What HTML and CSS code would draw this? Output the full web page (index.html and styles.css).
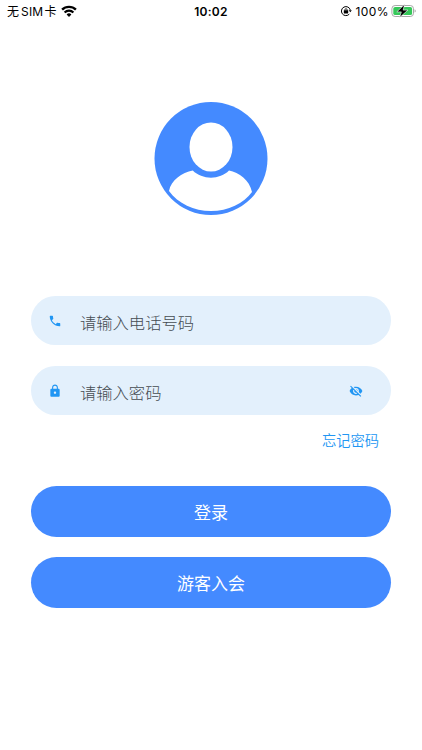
FILE: index.html
```html
<!DOCTYPE html>
<html lang="zh-CN">
<head>
	<meta charset="utf-8">
	<meta name="viewport" content="width=device-width, initial-scale=1">
	<title>登录</title>
	<link rel="stylesheet" href="styles.css">
</head>
<body>
	<div class="status">
		<div class="status-left">
			<span class="carrier">无<span class="sim">SIM</span>卡</span>
			<svg class="wifi" viewBox="0 0 16 12" width="16" height="12">
				<path d="M1.1 4.7a9.8 9.8 0 0 1 13.8 0" fill="none" stroke="#000" stroke-width="2.4"/>
				<path d="M3.6 7.4a6.2 6.2 0 0 1 8.8 0" fill="none" stroke="#000" stroke-width="2.2"/>
				<path d="M8 11.9L5.6 9.5a3.4 3.4 0 0 1 4.8 0z"/>
			</svg>
		</div>
		<div class="time">10:02</div>
		<div class="status-right">
			<svg class="rotate" viewBox="0 0 12 12" width="12" height="12">
				<path d="M9.3 9.1A4.5 4.5 0 1 1 10.3 5" fill="none" stroke="#000" stroke-width="1"/>
				<path d="M8.6 5.2h3.2l-1.5 2.1z"/>
				<rect x="3.8" y="5.3" width="4.4" height="3.2" rx=".4"/>
				<path d="M4.9 5.6v-.8a1.1 1.1 0 0 1 2.2 0v.8" fill="none" stroke="#000" stroke-width=".8"/>
			</svg>
			<span class="percent">100%</span>
			<svg class="battery" viewBox="0 0 26 14" width="26" height="14">
				<rect x=".9" y="1.5" width="21.6" height="11" rx="3.2" fill="#fff" stroke="#a8a8a8"/>
				<rect x="2.3" y="2.9" width="18.8" height="8.2" rx="1.9" fill="#35c759"/>
				<path d="M23.6 5.3v3.2q1.1-.5 1.1-1.6t-1.1-1.6z" fill="#a0a0a0"/>
				<path d="M13.6.3L5.8 7.9h4.5L8.6 13.600l8.300-7.500h-4.700z" stroke="#fff" stroke-width=".6"/>
			</svg>
		</div>
	</div>

	<div class="login">
		<svg class="avatar" viewBox="0 .5 114 114" width="114" height="114">
			<circle cx="57" cy="57" r="56.5" fill="#448aff"/>
			<ellipse cx="57" cy="45.500" rx="21.500" ry="24.500" fill="#fff"/>
			<path d="M38.800 69C28 71 17 78.500 15 89.500C24 102 40 109.500 57 109.500S90 102 98 90.500C95.500 78.500 85 71 75 69C66 78.500 48 78.500 38.800 69z" fill="#fff"/>
		</svg>

		<form class="form">
			<label class="field">
				<svg class="icon" viewBox="0 0 24 24" width="14" height="14"><path d="M6.62 10.79c1.44 2.83 3.76 5.14 6.59 6.59l2.2-2.2c.27-.27.67-.36 1.02-.24 1.12.37 2.33.57 3.57.57.55 0 1 .45 1 1V20c0 .55-.45 1-1 1-9.390 0-17-7.610-17-17 0-.55.45-1 1-1h3.500c.55 0 1 .45 1 1 0 1.250.2 2.450.57 3.570.11.35.03.74-.25 1.020l-2.200 2.200z"/></svg>
				<input type="tel" placeholder="请输入电话号码">
			</label>
			<label class="field">
				<svg class="icon" viewBox="0 0 24 24" width="14" height="14"><path d="M18 8h-1V6c0-2.760-2.240-5-5-5S7 3.240 7 6v2H6c-1.100 0-2 .9-2 2v10c0 1.100.9 2 2 2h12c1.100 0 2-.9 2-2V10c0-1.100-.9-2-2-2zm-6 9c-1.100 0-2-.9-2-2s.9-2 2-2 2 .9 2 2-.9 2-2 2zm3.100-9H8.900V6c0-1.710 1.390-3.100 3.100-3.100 1.710 0 3.100 1.390 3.100 3.100v2z"/></svg>
				<input type="password" placeholder="请输入密码">
				<svg class="icon" viewBox="0 0 24 24" width="14" height="14"><path d="M12 7c2.760 0 5 2.240 5 5 0 .65-.13 1.260-.36 1.830l2.920 2.920c1.510-1.260 2.700-2.890 3.430-4.750-1.730-4.390-6-7.500-11-7.500-1.400 0-2.740.25-3.980.7l2.160 2.160C10.740 7.130 11.350 7 12 7zM2 4.270l2.280 2.280.46.46C3.080 8.300 1.780 10.020 1 12c1.730 4.390 6 7.500 11 7.500 1.550 0 3.030-.3 4.380-.84l.42.42L19.730 22 21 20.730 3.270 3 2 4.270zM7.530 9.800l1.550 1.550c-.05.21-.08.43-.08.65 0 1.660 1.340 3 3 3 .22 0 .44-.03.65-.08l1.550 1.550c-.67.33-1.410.53-2.200.53-2.760 0-5-2.240-5-5 0-.79.2-1.530.53-2.200zm4.310-.78l3.150 3.150.02-.16c0-1.660-1.340-3-3-3l-.17.01z"/></svg>
			</label>
			<a class="forget">忘记密码</a>
			<button class="btn" type="button">登录</button>
			<button class="btn" type="button">游客入会</button>
		</form>
	</div>
</body>
</html>
```
FILE: styles.css
```css
* {
	box-sizing: border-box;
}
body {
	margin: 0;
	background: #fff;
	font-family: "Noto Sans CJK SC", sans-serif;
	font-weight: 300;
}
.status {
	display: grid;
	grid-template-columns: 1fr auto 1fr;
	align-items: center;
	height: 22px;
	padding: 0 5px 0 7px;
	font-size: 12px;
	line-height: 22px;
	color: #000;
}
.status-left,
.status-right {
	display: flex;
	align-items: center;
}
.status-right {
	justify-content: flex-end;
}
.carrier {
	font-weight: 400;
}
.sim {
	font-family: Inter, sans-serif;
	font-size: 12px;
	letter-spacing: .2px;
	margin: 0 1px 0 2px;
}
.wifi {
	margin: -2px 0 0 5px;
}
.time {
	margin-right: 2px;
	font-family: Inter, sans-serif;
	font-weight: 600;
	letter-spacing: .3px;
}
.rotate {
	margin: -1px 4px 0 0;
}
.percent {
	margin-right: 2px;
	font-family: Inter, sans-serif;
	font-weight: 400;
	letter-spacing: .4px;
}
.battery {
	margin-top: -1px;
}
.login {
	display: flex;
	flex-direction: column;
	align-items: center;
	padding: 80px 31px 0;
}
.avatar {
	display: block;
}
.form {
	display: flex;
	flex-direction: column;
	width: 100%;
	margin-top: 80px;
}
.field {
	display: flex;
	align-items: center;
	height: 49px;
	margin-bottom: 21px;
	padding: 0 28px 0 17px;
	border-radius: 25px;
	background: #e3f0fc;
}
.icon {
	flex: none;
	fill: #2196f3;
}
.field input {
	flex: 1;
	min-width: 0;
	margin-left: 18px;
	padding: 3px 0 0;
	border: 0;
	outline: 0;
	background: none;
	font: inherit;
	font-size: 16.3px;
}
.field input::placeholder {
	color: #454c52;
	opacity: 1;
}
.forget {
	align-self: flex-end;
	margin: -7px 12px 35px 0;
	font-size: 14.25px;
	font-weight: 350;
	line-height: 22px;
	color: #2196f3;
}
.btn {
	height: 51px;
	margin-bottom: 20px;
	padding: 0 0 1px;
	border: 0;
	border-radius: 26px;
	background: #448aff;
	color: #fff;
	font: inherit;
	font-size: 17px;
	font-weight: 400;
}
```
